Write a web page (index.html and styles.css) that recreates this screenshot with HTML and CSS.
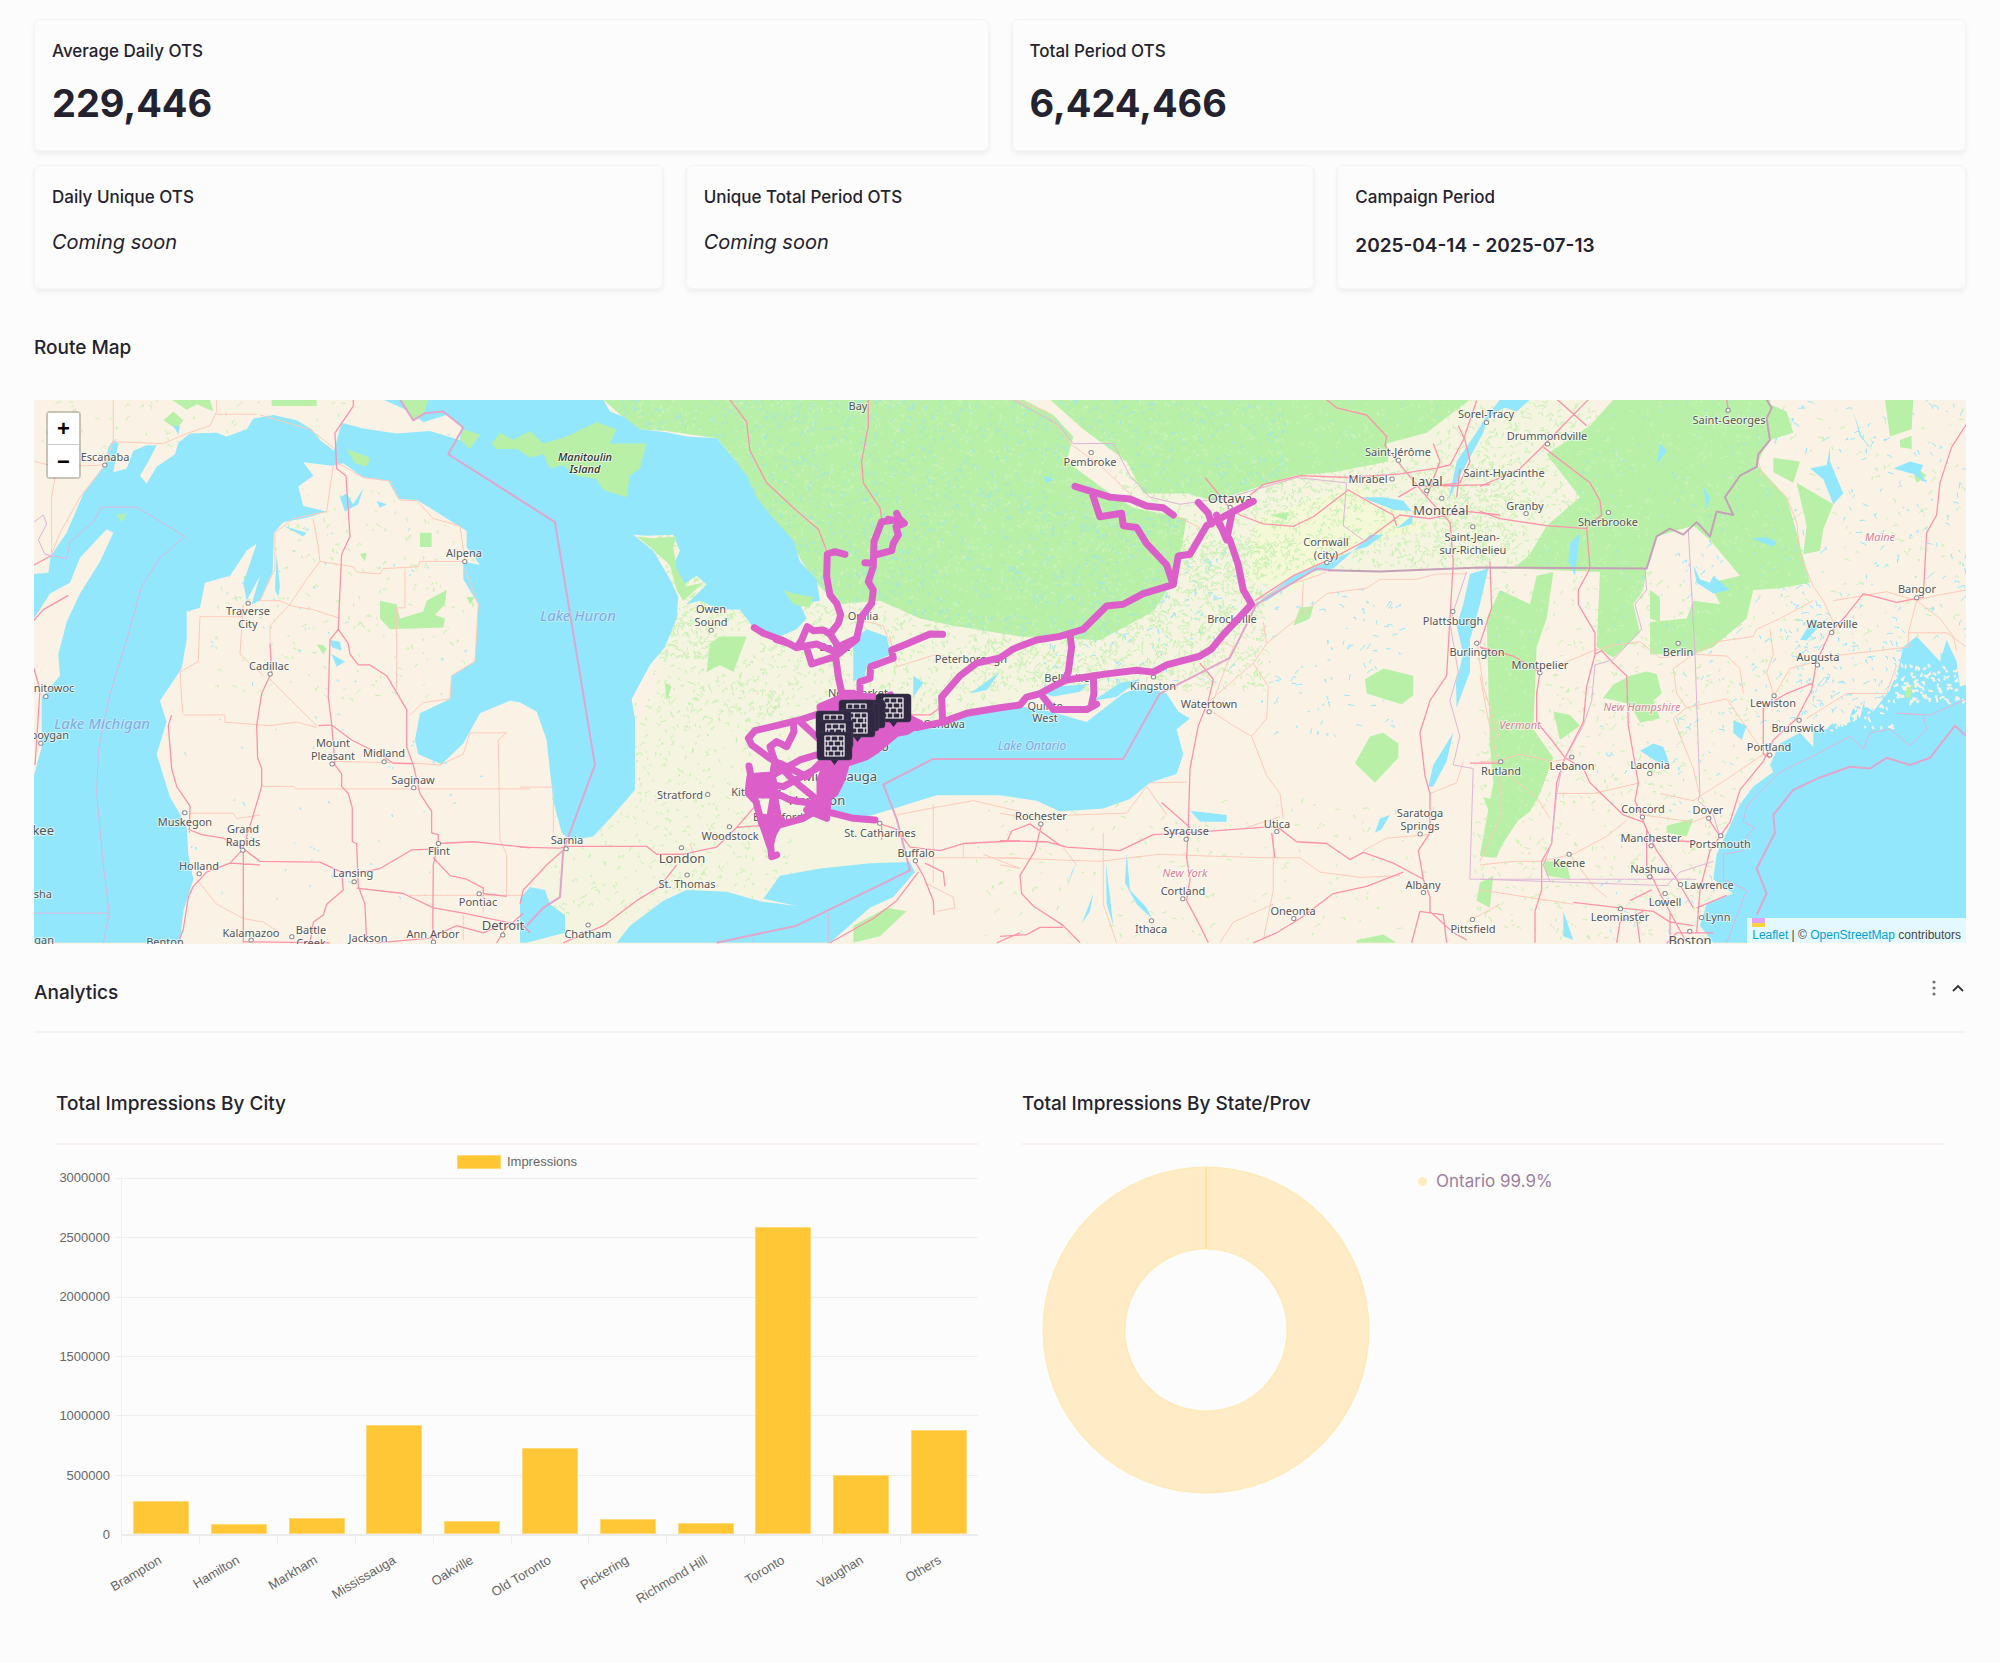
FILE: index.html
```html
<!DOCTYPE html>
<html lang="en">
<head>
<meta charset="utf-8">
<meta name="viewport" content="width=device-width, initial-scale=1">
<title>Campaign report</title>
<link rel="stylesheet" href="styles.css">
</head>
<body>
<main class="page">
  <section class="cards cards-two">
    <article class="card"><h3 class="card-title">Average Daily OTS</h3><p class="card-number">229,446</p></article>
    <article class="card"><h3 class="card-title">Total Period OTS</h3><p class="card-number">6,424,466</p></article>
  </section>
  <section class="cards cards-three">
    <article class="card"><h3 class="card-title">Daily Unique OTS</h3><p class="card-soon">Coming soon</p></article>
    <article class="card"><h3 class="card-title">Unique Total Period OTS</h3><p class="card-soon">Coming soon</p></article>
    <article class="card"><h3 class="card-title">Campaign Period</h3><p class="card-dates">2025-04-14 - 2025-07-13</p></article>
  </section>

  <h2 class="heading">Route Map</h2>
  <section class="map">
    <svg class="map-art" viewBox="0 0 1932 544" preserveAspectRatio="xMidYMid slice" role="img" aria-label="Route map">
      <defs>
        <g id="brick">
          <path d="M13 27h9l-4.500 6z" fill="#2f2840"/>
          <rect width="35" height="28" rx="3" fill="#2f2840" stroke="#463c58" stroke-width=".5"/>
          <path d="M8 4h19v20H8zM8 9h19M8 14h19M8 19h19M14 4v5M21 4v5M11 9v5M17 9v5M24 9v5M14 14v5M21 14v5M11 19v5M17 19v5M24 19v5" fill="none" stroke="#fff" stroke-width="1.200" stroke-linejoin="round"/>
        </g>
        <clipPath id="woods-clip">
          <path transform="matrix(.3333 0 0 .3571 486 -10)" d="M250 27H1510L1600 70 1660 130 1640 200 1770 290 1840 330 2000 360 1970 520 1900 620 1740 700 1500 690 1300 660 1200 640 1080 590 950 600 880 530 800 410 740 350 700 290 640 190 590 135 440 115 350 110z"/>
          <path transform="matrix(.3333 0 0 .3571 966 -10)" d="M150 27H1410L1280 120 1160 150 1165 200 1000 230 880 240 780 270 640 310 560 290 430 290 380 200 250 110z"/>
          <path transform="matrix(.3333 0 0 .3571 1446 -10)" d="M330 100 400 27H870V130L830 210 920 300 950 400 990 540 900 555 820 560 800 640 700 720 640 740 510 740 510 650 620 640 640 590 720 600 690 540 780 520 690 420 640 380 530 410 500 495 490 560 460 600 480 680 400 750 350 720 360 510 100 500 150 460 200 380 300 300 200 180zM20 640 60 560 150 600 170 520 220 510 200 640 170 720 160 950 220 1030 180 1130 150 1180 80 1230 50 1310 0 1300 40 1100 30 1000z"/>
        </clipPath>
      </defs>

      <rect width="1932" height="544" fill="#faf3e5"/>
      <path d="M486 544 520 440 620 300 640 130 960 200 1130 60 1390 0H1560L1500 170H1290L1150 270 880 330 790 420 890 425 880 460 700 510 570 544z" fill="#f4f4e0"/>
      <path d="M1220 120 1320 85 1400 130 1330 140 1260 190 1215 180z" fill="#f4f8d6"/>
      <path class="fleck-green"/><path class="fleck-pond"/>

      <g class="forest">
        <rect width="1932" height="544" clip-path="url(#woods-clip)"/>
        <g transform="matrix(.3333 0 0 .3571 -4 -10)">
          <path d="M400 85 430 60 460 85 440 110zM425 27H540L550 60 500 40 470 55zM725 27H860V45H725zM1170 400h35v40h-35zM1050 590 1100 600 1110 640 1180 620 1190 590 1250 560 1245 600 1215 630 1245 640 1240 665 1080 670 1050 640zM990 460 1010 455 1005 480zM860 712 880 715 890 725 880 740zM660 215 680 215 680 270 655 270zM525 440 545 445 550 475 530 475zM690 180 730 190 700 200zM1310 580 1335 580 1320 600zM640 520 655 525 650 560z"/>
        </g>
        <g transform="matrix(.3333 0 0 .3571 486 -10)">
          <path d="M570 710 600 690 680 690 660 740 640 790 600 770 560 790zM435 820 455 830 440 870zM1000 1500 1100 1450 1160 1460 1080 1530 1000 1548z"/>
        </g>
        <g transform="matrix(.3333 0 0 .3571 966 -10)">
          <path d="M1095 810 1150 780 1240 800 1240 855 1205 880 1100 850zM1065 1045 1110 970 1150 960 1195 990 1195 1030 1125 1100zM900 610 940 605 930 640 880 660zM1070 1540 1150 1525 1190 1548H1070zM1440 1380 1480 1360 1470 1450 1430 1430zM1450 1140 1490 1150 1480 1210zM810 350 865 342 860 365z"/>
        </g>
        <g transform="matrix(.3333 0 0 .3571 1446 -10)">
          <path d="M450 800 500 788 530 795 545 850 520 870 540 920 480 932 450 880 370 862 400 825zM220 900 270 910 300 940 240 980zM60 1120 150 1110 140 1170 40 1310 0 1305zM190 1320 260 1320 270 1370 200 1360zM870 40 920 60 940 120 870 140zM880 190 960 200 940 260 880 230zM950 260 1060 320 1030 390 1020 450 970 460 980 380zM1215 27 1300 27 1295 110 1230 130zM1260 140 1295 128 1295 165 1260 160zM560 1220 640 1200 620 1250 560 1240zM510 560 540 580 540 650 510 640zM1290 200 1340 240 1310 260z"/>
        </g>
      </g>
      <g clip-path="url(#woods-clip)"><path class="fleck-light"/><path class="fleck-water"/></g>

      <g class="water">
        <g transform="matrix(.3333 0 0 .3571 -4 -10)">
          <path d="M12 515 55 512 62 465 110 400 160 290 225 210 235 160 250 140 265 150 250 230 290 220 310 170 350 155 380 155 355 200 330 240 350 262 380 215 435 180 445 148 480 122 560 120 590 130 650 110 670 80 730 70 800 85 845 110 870 140 912 170 935 92 1000 108 1100 122 1200 115 1290 140 1295 100 1250 70 1180 90 1140 60 1060 27H1720L1740 60 1780 75 1830 110 1910 118 1970 130 2060 135 2110 190 2150 240 2180 300 2230 360 2290 420 2310 480 2360 530 2370 590 2310 600 2330 640 2300 670 2250 690 2170 665 2130 615 2070 615 2010 590 1970 600 2030 545 2000 520 1960 545 1930 490 1950 450 1930 405 1850 408 1810 405 1870 450 1920 530 1945 580 1940 640 1905 720 1860 770 1805 865 1815 920 1815 1120 1750 1190 1690 1250 1620 1260 1595 1240 1570 1150 1550 980 1520 900 1470 875 1440 870 1350 905 1300 990 1235 1048 1165 1020 1155 980 1170 905 1260 865 1265 800 1335 760 1345 600 1300 530 1300 480 1350 490 1310 440 1310 395 1200 330 1160 308 1105 305 1075 255 1000 245 940 205 905 212 820 202 850 240 805 270 820 325 890 340 830 358 760 370 732 400 728 510 690 590 665 600 690 520 650 590 640 540 680 430 650 450 600 520 525 540 510 610 470 620 470 700 455 780 390 870 410 930 380 1020 420 1140 470 1220 475 1300 490 1370 460 1460 450 1548H12V1080L35 1000 35 860 90 800 85 740 110 650 150 570 210 480 250 400 230 390 150 470 120 540 60 570 12 640z"/>
          <path d="M930 300 950 290 970 320 1000 275 985 320 945 340zM1040 310 1070 320 1050 330zM900 700 930 705 935 730 905 720zM905 740 945 760 920 775zM740 460 750 550 745 580 735 560zM760 380 830 400 820 410zM430 100 450 100 445 125z"/>
        </g>
        <g transform="matrix(.3333 0 0 .3571 486 -10)">
          <path d="M290 1548 330 1500 430 1430 500 1400 620 1405 720 1432 830 1445 730 1425 780 1360 900 1340 1050 1325 1170 1322 1185 1350 1120 1420 1050 1450 930 1548zM0 1425 30 1392 75 1400 90 1440 135 1470 135 1520 20 1548H0zM1000 700 1040 670 1100 690 1112 740 1040 770 1035 800 1000 815zM1180 800 1210 820 1180 860zM1350 850 1440 790 1400 840z"/>
          <path d="M910 1180 960 1100 1000 1040 1060 1020 1130 960 1200 940 1300 920 1500 885 1590 900 1700 930 1740 900 1810 850 1870 830 1940 850 1975 900 2010 920 1970 950 1990 1020 1970 1075 1890 1100 1830 1145 1750 1172 1620 1180 1550 1150 1440 1135 1250 1135 1130 1170 1040 1195 940 1190z"/>
          <path d="M1570 850 1600 830 1700 825 1680 845 1600 858zM1720 870 1800 820 1860 810 1790 860z"/>
        </g>
        <g transform="matrix(.3333 0 0 .3571 966 -10)">
          <path d="M1410 515 1465 500 1440 600 1410 700 1410 790 1370 890 1368 820 1390 740 1370 660 1390 600zM570 1178 680 1190 680 1210 600 1208zM1085 300 1150 300 1210 310 1240 345 1235 375 1190 388 1250 340 1180 335zM1060 450 1110 405 1150 405 1100 440zM1345 310 1370 200 1450 90 1470 50 1450 120 1380 240zM1125 1240 1140 1200 1170 1190 1145 1230zM1285 1110 1300 1050 1360 960 1340 1040 1300 1110zM1440 100 1500 27H1570L1490 60zM380 1295 390 1400 440 1450 455 1480 410 1440 375 1380zM318 1325 340 1500 320 1440zM228 1325 200 1395 215 1350zM440 1310 460 1365zM245 1495 280 1410 270 1460zM130 240 160 250 140 260zM1090 760 1080 800 1085 780zM780 590 880 520 960 490 1060 450 1000 500 930 510 800 590z"/>
        </g>
        <g transform="matrix(.3333 0 0 .3571 1446 -10)">
          <path d="M1270 720 1255 780 1230 840 1180 900 1150 880 1140 920 1120 890 1100 940 1060 930 1040 950 1000 950 1000 1000 960 960 900 990 870 1050 880 1070 820 1110 780 1160 740 1240 710 1300 700 1370 760 1410 680 1440 660 1500 700 1548H1480V820L1440 830 1430 760 1400 700 1380 760 1340 720 1310 690zM1050 160 1050 200 1090 290 1060 320 1030 250 990 220 1040 210zM1120 60 1145 130 1180 170 1140 130zM1290 200 1330 210 1320 230 1340 260 1300 235 1240 220zM640 490 660 530 690 540 700 520 750 560 700 570 650 540zM815 415 860 412 890 425 880 440zM760 925 800 940 785 980 760 960zM520 990 550 1000 570 1050 530 1040 480 1010zM580 120 620 180 600 150zM540 150 530 210 560 170zM270 430 300 400 285 520 265 480zM960 700 1000 640 1020 660 980 700zM60 27H150L110 60 60 45zM250 1460 280 1540 250 1530zM670 270 690 300 680 330z"/>
        </g>
      </g>
      <g class="forest" transform="matrix(.3333 0 0 .3571 -4 -10)">
        <path d="M1115 27H1195L1180 70 1150 85zM1290 140 1300 110 1350 125 1320 165zM1365 130 1385 150 1410 120 1450 140 1500 115 1540 150 1610 130 1700 90 1760 110 1740 150 1850 150 1830 220 1800 240 1790 300 1720 280 1700 250 1640 240 1600 210 1560 220 1540 180 1500 190 1460 165 1400 165zM1820 410 1870 415 1940 410 1930 440 1940 500 1970 550 2020 540 1960 590 1940 560 1920 490 1860 440zM950 165 1020 190 1010 215 975 205zM2260 560 2290 570 2350 580 2340 610 2290 600zM260 350 290 345 275 370zM5625 830 5650 825 5640 865 5625 860z"/>
      </g>
      <path class="fleck-isle"/>

      <g class="roads-minor">
        <path transform="matrix(.3333 0 0 .3571 -4 -10)" d="M250 27V140L225 210M250 145 400 150 470 122 540 100 560 60V27M560 68H680M690 70 840 110 915 165M12 200 80 215 225 210 150 300 90 400 62 465M80 215 65 300V460M925 205 1000 245 1080 255 1110 308 1160 310 1210 360 1290 380 1305 480M1305 480 1170 480 1165 495 1060 500 1050 515 980 510 970 495 870 480 865 440 850 360M870 480 830 530 780 600 720 660V710M690 590H750L785 605 850 615 925 638M690 590 735 500 735 400 790 360 890 340 910 210M1125 500V610H1100V840M1305 500 1345 600 1335 760 1265 800 1260 865 1180 875 1140 910M460 910H585V930L720 940 800 930 860 945M720 810 860 940M510 635H640M640 600 630 740 700 800M510 635 505 760 450 790 458 905M915 1040 1150 1045 1230 1050 1300 1020 1320 960 1430 960 1405 980 1410 1260 1430 1300V1420M695 1110H790L800 1117H1500M480 1185H610L620 1200 690 1190M500 1370 560 1440 640 1480 700 1490 750 1520M1140 1415H1480M1300 1470V1540M1360 1390V1465"/>
        <path transform="matrix(.3333 0 0 .3571 486 -10)" d="M0 1112H100V1240M1110 690 1130 775 1250 740 1330 760 1420 770M1000 640 1090 660 1110 710M1130 1190 1240 1170 1360 1150 1500 1180M1240 1160V1380M1200 1310H1500M1330 1270V1310M1215 1380 1300 1420 1305 1450 1250 1460M510 1270 520 1300M1500 1340 1390 1300"/>
        <path transform="matrix(.3333 0 0 .3571 966 -10)" d="M45 27 140 60 210 150 300 210 400 300 520 350 600 385M980 510 920 530 850 550 770 590M980 570 1100 555 1140 530 1250 530 1310 515H1400M980 570 905 630 910 540M905 630 800 710 760 765 630 870M640 870 700 720 660 700M790 650 800 710M760 765 805 830 800 920 755 970 700 940 635 900M755 970 800 1080 840 1130 850 1200M450 1100 560 1098M0 1185 60 1195 380 1185 440 1110 500 1190M0 1310 300 1320 480 1300 620 1305 800 1310 900 1310 960 1350 1080 1365 1200 1360M310 1240V1440L350 1548M740 1225 840 1195M820 1240V1400L790 1540M1290 1130 1370 1100 1390 1040M1290 1245 1160 1255 1090 1290M1430 700 1450 830 1500 980M180 1270 230 1330M0 1330 60 1340M660 1548 700 1490 820 1440M1400 1490 1500 1440"/>
        <path transform="matrix(.3333 0 0 .3571 1446 -10)" d="M830 190 850 240 920 300 950 370 960 460 1000 550 1030 590 1060 650M1000 590 900 640 830 670 820 690 710 705 640 740 540 750 480 705 400 715 340 730 200 785M640 740 740 745 780 780 790 850M640 740 580 780 590 850 620 890 580 920 610 990 640 1060 660 1140M620 890 740 865 840 1000M1060 590 1220 565 1310 590 1370 575 1460 560M1310 590 1285 680 1400 680 1460 720M1285 680V720L1010 750M1010 760 930 780 880 860 850 900M880 850 860 790 880 740 870 670M980 920 1100 850 1220 850 1250 770M1310 590 1380 640 1420 690 1430 730M0 1040 50 1040 120 1020 220 1040 280 1030M230 1130 340 1130 480 1100M180 1320 280 1300 380 1250 440 1205M270 1300 340 1390 380 1420M0 1400 280 1440M490 1190 640 1210 690 1190M540 1130 640 1150 740 1090 850 1020M0 1330 100 1320 180 1320M0 800 20 900 50 1030M60 1060 170 1140 210 1200M60 1060 60 1200 0 1320"/>
      </g>
      <g class="roads-main">
        <path transform="matrix(.3333 0 0 .3571 -4 -10)" d="M970 27V45L915 120 920 220 948 240 960 410 935 460 930 560 925 670 900 700 895 860 905 935 915 1050 935 1075V1110L955 1130 967 1170V1265L980 1270 985 1390 1005 1440 1010 1548M925 670 955 710 960 740 985 770 1020 770 1070 800 1130 895V1000L1150 1050 1170 1130 1205 1180V1240L1225 1245 1225 1270M1225 1270 1210 1330 1208 1548M720 710 725 790 695 850 680 940 683 1030 695 1060V1110L670 1190 640 1280 640 1548M865 940 905 938 965 980 1050 1020 1090 1045 1150 1047M425 910 415 940 425 1060 440 1110 480 1165 478 1240M475 1230 515 1245 580 1255 640 1285 690 1320 870 1322 935 1350 1000 1350 1050 1340 1145 1288 1225 1285M1225 1270 1330 1265 1500 1282M640 1285 600 1325 530 1350 490 1390 475 1420 460 1510 445 1548M12 490 62 465M12 645 40 615 115 575M12 780 30 840 15 1050M980 1395 1120 1410 1210 1450 1300 1465 1480 1500 1500 1520M935 1350 940 1400 890 1440 880 1470 850 1490 840 1548M1210 1310 1260 1360 1310 1370 1360 1395V1410L1430 1418M1040 1548 1200 1535 1280 1500 1360 1520 1410 1500M600 1325 690 1330M640 1545 900 1548M1400 1548 1425 1510 1480 1465"/>
        <path transform="matrix(.3333 0 0 .3571 486 -10)" d="M630 27 680 90 690 170 740 260 820 330 895 390 920 450M1045 27 1045 100 1025 200 1030 260 1080 330 1085 360M0 1280 120 1283 140 1278 380 1278 410 1300 490 1300 590 1280 650 1225 720 1220M140 1280 80 1330 10 1400 0 1440M470 1330 420 1390 350 1430 250 1500 130 1548M650 1225 720 1150M1080 1215 1130 1230 1170 1280 1260 1290 1330 1270 1500 1262M1185 1320 1210 1360 1240 1430 1242 1470M1195 1350 1130 1430 1060 1480 930 1548M1085 1220 1085 1260M1215 1325 1270 1350 1275 1390M1140 910 1230 910 1260 890M1430 1548 1500 1520"/>
        <path transform="matrix(.3333 0 0 .3571 966 -10)" d="M980 27 1010 50 1100 70 1130 100 1160 130 1155 155 1210 220 1290 310M615 245 690 330 720 350 790 375 880 382 940 355 1045 280 1120 320 1180 350 1190 380M750 295 790 265 900 240 1045 245 1200 235 1300 220 1350 210 1390 140 1430 30M765 590 880 520 1000 470 1100 420 1200 350 1290 360 1400 340 1500 350M1290 310 1350 370 1360 480 1350 640 1340 800 1290 870 1260 960 1275 1080 1290 1130 1290 1240 1255 1290 1270 1370 1290 1420V1460L1360 1520 1400 1540M600 765 640 810 625 870 595 940 570 1060 565 1220 560 1310 570 1370 560 1430 600 1500 625 1548M0 1262 140 1265 200 1280 360 1290 460 1245 560 1240 830 1222 890 1265 980 1270 1050 1315 1090 1295 1180 1325 1270 1370M125 1215 105 1290 60 1360 65 1410 100 1445 190 1500 240 1548M1210 1350 1100 1390 1000 1410 900 1480 830 1520 760 1548M815 1240 825 1310M485 1155 570 1225M22 1262 35 1235 90 1215 180 1275M1260 1460 1235 1548M1440 720 1500 745M1470 480 1475 610 1440 710M1375 100 1395 140 1410 200 1380 260 1290 270M1300 150 1320 200 1280 300M1410 1045 1500 1045M0 1530 80 1525 120 1505 190 1505M1380 220 1370 300M1195 300 1250 270 1470 265M1260 1460 1330 1470 1340 1548"/>
        <path transform="matrix(.3333 0 0 .3571 1446 -10)" d="M325 27 180 165 120 220 50 250 0 270M190 160 260 210 330 260 360 310 365 350 320 385 330 500 295 560 295 600 345 680 345 740 320 830 310 930 255 1030 230 1100 215 1270 185 1320 185 1400 165 1460 165 1548M0 340 60 360 200 380 320 388M232 27 320 100M0 720 100 745 180 790 170 850 170 930 215 980 255 1030 310 1060 330 1100 430 1190 490 1210 530 1290 590 1370 640 1450M345 740 365 730 400 765 440 800 445 940 460 1020 475 1100 465 1150 500 1230 500 1330 540 1410 620 1548M740 27 745 55M1460 95 1415 160 1380 260 1370 350 1340 400 1330 580 1250 595 1150 570 1100 630 1050 680 1010 760 995 840 950 920 880 980 850 1040 780 1120 750 1210 690 1290 660 1400 650 1520M1000 820 920 850 850 890 850 1020 870 1030M500 1260 650 1265M515 1400 450 1430M280 1435 420 1450 520 1460 570 1490 640 1500M685 1200 720 1250M740 1415 650 1450M570 1460V1548M410 1548 420 1490 490 1460M470 1480 480 1548M560 1550 590 1520 700 1520"/>
      </g>
      <g class="borders">
        <path transform="matrix(.3333 0 0 .3571 -4 -10)" class="border-strong" d="M1110 27 1150 85 1185 65 1240 60 1300 105 1255 180 1575 370 1695 1050 1600 1290 1590 1420 1540 1450 1490 1500M2060 1548 2300 1500 2640 1345 2600 1200 2560 1105 2710 1033H3280L3390 850 3600 750 3680 600 3860 500 3900 505"/>
        <path transform="matrix(.3333 0 0 .3571 -4 -10)" d="M12 370 40 350 50 375 25 420 45 460 110 472 120 425 190 370 215 328H320L465 410 390 470 335 550 290 700 240 850 205 1010 200 1130 220 1330 238 1465 220 1548M12 1465H238M2170 1548V1535M2395 1548V1465M2950 27 3090 100 3130 150 3250 150 3300 240 3360 300 3450 320 3600 300 3800 245 3950 260 3940 380 4000 420M4310 510 4260 650 4285 790 4260 870 4290 970 4270 1050 4330 1060 4320 1370H5000"/>
        <path transform="matrix(.3333 0 0 .3571 1446 -10)" class="border-strong" d="M830 1470 860 1410 830 1340 885 1240 880 1190 940 1120 1020 1085 1110 1055 1170 1060 1220 1030 1290 1050 1350 1030 1425 940 1460 970"/>
        <path transform="matrix(.3333 0 0 .3571 1446 -10)" d="M740 1548 800 1400 730 1370 730 1300 790 1290 800 1250 825 1225 790 1210 800 1165 900 1070 1000 1025 1110 970 1150 1005 1170 960 1230 950 1290 995 1340 950 1330 910 1250 905 1350 910 1460 865M0 1370 560 1388 600 1350 700 1320M625 390 645 740 655 1000 660 1130 655 1150 700 1190 720 1250M495 500 500 560 465 600 485 670 400 755 345 770 335 870 310 940 250 1040 230 1130 215 1270 190 1330 210 1375"/>
        <path transform="matrix(.3333 0 0 .3571 1446 -10)" class="border-land" d="M-455 505-300 508 0 497 500 500 530 410 570 388 610 405 650 370 690 410 710 340 760 350 735 300 780 240 830 215 835 180 870 140 860 80 875 50 860 27"/>
      </g>

      <g class="towns">
        <path id="towns-w" transform="matrix(.3333 0 0 .3571 -4 -10)" d="M224 210h1M654 597h1M720 795h1M1304 480h1M47 858h1M32 989h1M906 1047h1M1062 1041h1M1151 1114h1M464 1184h1M638 1289h1M507 1355h1M972 1377h1M1225 1270h1M1347 1411h1M1418 1526h1M663 1540h1M785 1531h1M1210 1546h1M2043 673h1M2033 1133h1M2098 1223h1M1954 1282h1M1971 1358h1M1608 1285h1M1674 1498h1M2549 1213h1M2656 1318h1M2823 773h1"/>
        <path id="towns-e" transform="matrix(.3333 0 0 .3571 966 -10)" d="M273 175h1M690 328h1M1459 91h1M1195 197h1M1176 249h1M1280 282h1M1325 303h1M1418 383h1M980 483h1M1358 620h1M1430 709h1M460 804h1M627 901h1M122 1215h1M558 1258h1M830 1236h1M1260 1243h1M548 1425h1M881 1480h1M454 1486h1M1270 1407h1M1417 1483h1M1642 151h1M1578 346h1M1825 343h1M2184 57h1M2750 582h1M2495 679h1M2034 709h1M2452 770h1M1619 792h1M2322 856h1M2397 925h1M2309 1022h1M1502 1041h1M1715 1028h1M1949 1074h1M1927 1196h1M2126 1199h1M1953 1276h1M2162 1248h1M1707 1300h1M1949 1363h1M2041 1385h1M1995 1410h1M1861 1453h1M2104 1477h1M2069 1516h1"/>
        <use href="#towns-w" class="town-core"/><use href="#towns-e" class="town-core"/>
      </g>

      <g class="labels">
        <text x="71" y="61">Escanaba</text><text x="430" y="157">Alpena</text><text x="214" y="215">Traverse</text><text x="214" y="228">City</text><text x="235" y="270">Cadillac</text><text x="20" y="292">nitowoc</text><text class="end" x="35" y="339">boygan</text><text class="city end" x="20" y="435">kee</text><text class="end" x="18" y="498">sha</text><text class="end" x="20" y="544">gan</text>
        <text x="299" y="347">Mount</text><text x="299" y="360">Pleasant</text><text x="350" y="357">Midland</text><text x="379" y="384">Saginaw</text><text x="151" y="426">Muskegon</text><text x="209" y="433">Grand</text><text x="209" y="446">Rapids</text><text x="165" y="470">Holland</text><text x="319" y="477">Lansing</text><text x="405" y="455">Flint</text><text x="444" y="506">Pontiac</text><text class="city" x="469" y="530">Detroit</text><text x="399" y="538">Ann Arbor</text><text x="334" y="542">Jackson</text><text x="277" y="534">Battle</text><text x="277" y="547">Creek</text><text x="217" y="537">Kalamazoo</text><text x="131" y="546">Benton</text>
        <text class="isle" x="551" y="61">Manitoulin</text><text class="isle" x="551" y="73">Island</text><text x="824" y="10">Bay</text><text x="677" y="213">Owen</text><text x="677" y="226">Sound</text><text x="829" y="220">Orillia</text><text x="801" y="251">Barrie</text><text x="937" y="263">Peterborough</text><text x="824" y="297">Newmarket</text><text x="910" y="328">Oshawa</text><text class="city" x="831" y="351">Toronto</text><text class="city" x="806" y="381">Mississauga</text><text x="646" y="399">Stratford</text><text x="722" y="396">Kitchener</text><text class="city" x="783" y="405">Hamilton</text><text x="744" y="421">Brantford</text><text x="696" y="440">Woodstock</text><text x="846" y="437">St. Catharines</text><text x="882" y="457">Buffalo</text><text x="533" y="444">Sarnia</text><text class="city" x="648" y="463">London</text><text x="653" y="488">St. Thomas</text><text x="554" y="538">Chatham</text>
        <text x="1056" y="66">Pembroke</text><text class="city" x="1196" y="103">Ottawa</text><text x="1452" y="18">Sorel-Tracy</text><text x="1364" y="56">Saint-Jérôme</text><text x="1334" y="83">Mirabel</text><text class="city" x="1393" y="86">Laval</text><text class="city" x="1407" y="115">Montréal</text><text x="1470" y="77">Saint-Hyacinthe</text><text x="1292" y="146">Cornwall</text><text x="1292" y="159">(city)</text><text x="1438" y="141">Saint-Jean-</text><text x="1439" y="154">sur-Richelieu</text><text x="1419" y="225">Plattsburgh</text><text x="1198" y="223">Brockville</text><text x="1033" y="282">Belleville</text><text x="1119" y="290">Kingston</text><text x="1011" y="310">Quinte</text><text x="1011" y="322">West</text><text x="1175" y="308">Watertown</text><text x="1443" y="256">Burlington</text><text x="1467" y="375">Rutland</text><text x="1007" y="420">Rochester</text><text x="1152" y="435">Syracuse</text><text x="1243" y="428">Utica</text><text x="1386" y="417">Saratoga</text><text x="1386" y="430">Springs</text><text x="1149" y="495">Cortland</text><text x="1259" y="515">Oneonta</text><text x="1117" y="533">Ithaca</text><text x="1389" y="489">Albany</text><text x="1439" y="533">Pittsfield</text>
        <text x="1513" y="40">Drummondville</text><text x="1491" y="110">Granby</text><text x="1574" y="126">Sherbrooke</text><text x="1695" y="24">Saint-Georges</text><text x="1883" y="193">Bangor</text><text x="1798" y="228">Waterville</text><text x="1644" y="256">Berlin</text><text x="1784" y="261">Augusta</text><text x="1506" y="269">Montpelier</text><text x="1739" y="307">Lewiston</text><text x="1764" y="332">Brunswick</text><text x="1735" y="351">Portland</text><text x="1538" y="370">Lebanon</text><text x="1616" y="369">Laconia</text><text x="1609" y="413">Concord</text><text x="1674" y="414">Dover</text><text x="1617" y="442">Manchester</text><text x="1686" y="448">Portsmouth</text><text x="1535" y="467">Keene</text><text x="1616" y="473">Nashua</text><text x="1675" y="489">Lawrence</text><text x="1631" y="506">Lowell</text><text x="1586" y="521">Leominster</text><text x="1684" y="521">Lynn</text><text class="city" x="1656" y="545">Boston</text>
        <text class="lake" x="68" y="329">Lake Michigan</text><text class="lake" x="544" y="221">Lake Huron</text><text class="lake lake-small" x="998" y="350">Lake Ontario</text>
        <text class="state" x="1151" y="477">New York</text><text class="state" x="1846" y="141">Maine</text><text class="state" x="1608" y="311">New Hampshire</text><text class="state" x="1486" y="329">Vermont</text>
      </g>

      <g class="route">
        <g transform="matrix(.3333 0 0 .3333 686 80)">
          <path d="M103 443 130 460 185 480 230 503 245 480 262 440 280 452 310 450 330 462 355 430 362 405 350 370 330 345 320 290 322 222 345 215 375 223M330 462 355 500 410 475 425 410 455 370 460 330 445 305 460 260 462 185 485 125 540 118 553 130 528 140 535 165 520 190 515 212 465 225M435 248 460 250M230 503 290 492 345 515M275 552 262 510M345 515 355 590 370 660M275 552 345 530 410 478M420 655 420 605 450 595 452 560 520 535 515 510 560 492 630 462 668 463M370 640 400 640 420 660M360 680 240 720 105 752 85 775 95 795 150 835 175 850M220 725 222 755 200 800 170 785 150 800 165 845 160 870M240 725 300 780M87 858 95 900 85 940 108 965 125 1030 150 1080 155 1130 170 1125M95 895 150 890 240 840 290 825M130 900 200 860 260 890 310 840M180 850 240 880M170 940 210 960 310 975 225 905 170 850M160 930 175 1010 160 1040 250 1015 300 985M300 990 400 1015 465 1020M500 650 512 645M185 1025 150 1010 165 920M130 910 190 920 300 860M370 650 460 650M530 100 540 120M505 118 545 125M168 478 205 490"/>
          <path d="M300 680 370 650 480 660 560 710 600 730 560 755 530 760 470 810 440 830 380 850 365 900 345 940 325 950 320 1015 260 990 300 950 300 900 320 850z"/>
          <path d="M90 890 155 885 165 920 160 945 110 945 85 930zM120 1010 185 1020 160 1060 150 1100z"/>
        </g>
        <g transform="matrix(.3333 0 0 .3571 486 -10)">
          <path d="M1190 945 1268 930 1340 905 1440 890 1500 882 1520 860 1560 850 1600 830 1640 812 1760 795 1850 785 1900 790 1940 770 2040 745 2075 725 2110 685 2155 640 2195 600 2170 560 2155 490 2130 420 2100 380 2090 350M1268 930 1265 860 1320 800 1370 765 1440 750 1480 725 1550 700 1620 690 1690 670 1760 605 1810 600 1870 570 1960 545 1975 465 2010 460 2060 380 2120 350 2200 312M1960 545 1940 490 1880 430 1850 385 1810 380 1805 345 1740 355 1715 285M1665 270 1770 300 1830 305 1880 325 1930 330 1960 350M1650 685 1655 720 1645 790 1635 810M1570 860 1600 895 1700 895 1730 880M1720 800 1722 850 1715 880M2035 315 2065 345 2075 375M2100 375 2120 420 2135 350"/>
        </g>
      </g>

      <g>
        <use href="#brick" x="842" y="294"/><use href="#brick" x="816" y="300"/><use href="#brick" x="810" y="303"/><use href="#brick" x="805" y="300"/><use href="#brick" x="806" y="309"/><use href="#brick" x="782" y="311"/><use href="#brick" x="784" y="320"/><use href="#brick" x="783" y="332"/>
      </g>
    </svg>
    <div class="zoom">
      <button class="zoom-button" type="button" aria-label="Zoom in">+</button>
      <button class="zoom-button" type="button" aria-label="Zoom out">−</button>
    </div>
    <div class="credit">
      <svg class="flag" viewBox="0 0 13 9" aria-hidden="true"><path fill="#e0a3f5" d="M0 0h13v5H0z"/><path fill="#fdd13f" d="M0 5h13v4H0z"/></svg>
      <p class="credit-text"><a href="#leaflet">Leaflet</a> | © <a href="#osm">OpenStreetMap</a> contributors</p>
    </div>
  </section>

  <header class="bar">
    <h2 class="bar-title">Analytics</h2>
    <div class="bar-tools">
      <button class="icon-button" type="button" aria-label="More options"><svg width="6" height="18" viewBox="0 0 6 18"><g fill="#777"><circle cx="3" cy="3" r="1.600"/><circle cx="3" cy="9" r="1.600"/><circle cx="3" cy="15" r="1.600"/></g></svg></button>
      <button class="icon-button" type="button" aria-label="Collapse"><svg width="16" height="18" viewBox="0 0 16 18"><path d="M3 12 8 7 13 12" fill="none" stroke="#333" stroke-width="1.800"/></svg></button>
    </div>
  </header>

  <section class="panels">
    <article class="panel">
      <h3 class="panel-title">Total Impressions By City</h3>
      <div class="legend"><span class="swatch"></span>Impressions</div>
      <div class="chart">
        <div class="scale"><span>3000000</span><span>2500000</span><span>2000000</span><span>1500000</span><span>1000000</span><span>500000</span><span>0</span></div>
        <div class="plot">
          <div class="lines"><i></i><i></i><i></i><i></i><i></i><i></i></div>
          <div class="bars">
            <div class="slot"><b style="height:9.2%"></b></div>
            <div class="slot"><b style="height:2.7%"></b></div>
            <div class="slot"><b style="height:4.6%"></b></div>
            <div class="slot"><b style="height:30.6%"></b></div>
            <div class="slot"><b style="height:3.7%"></b></div>
            <div class="slot"><b style="height:24.1%"></b></div>
            <div class="slot"><b style="height:4.3%"></b></div>
            <div class="slot"><b style="height:3.1%"></b></div>
            <div class="slot"><b style="height:86.3%"></b></div>
            <div class="slot"><b style="height:16.5%"></b></div>
            <div class="slot"><b style="height:29.2%"></b></div>
          </div>
        </div>
        <div class="names">
          <div class="name"><span>Brampton</span></div><div class="name"><span>Hamilton</span></div><div class="name"><span>Markham</span></div><div class="name"><span>Mississauga</span></div><div class="name"><span>Oakville</span></div><div class="name"><span>Old Toronto</span></div><div class="name"><span>Pickering</span></div><div class="name"><span>Richmond Hill</span></div><div class="name"><span>Toronto</span></div><div class="name"><span>Vaughan</span></div><div class="name"><span>Others</span></div>
        </div>
      </div>
    </article>
    <article class="panel">
      <h3 class="panel-title">Total Impressions By State/Prov</h3>
      <div class="share">
        <svg class="donut" viewBox="0 0 328 328" role="img" aria-label="Ontario 99.9%">
          <circle cx="164" cy="164" r="122" fill="none" stroke="#ffe9b8" stroke-width="83"/>
          <circle cx="164" cy="164" r="122" fill="none" stroke="#ffecc6" stroke-width="80"/>
          <path d="M164 1V82" stroke="#ffe3a3" stroke-width="2"/>
        </svg>
        <p class="share-label"><span class="dot"></span>Ontario 99.9%</p>
      </div>
    </article>
  </section>
</main>
<script src="flecks.js"></script>
</body>
</html>
```
FILE: flecks.js
```js
// Scatters small lakes, clearings and woodlots over the map's land cover.
(function () {
  var seed = 7;
  function rnd() {
    seed = (seed * 16807) % 2147483647;
    return seed / 2147483647;
  }
  // Each area is [count, left, top, right, bottom, size].
  function scatter(selector, areas) {
    var d = "";
    areas.forEach(function (a) {
      for (var i = 0; i < a[0]; i++) {
        var x = a[1] + rnd() * (a[3] - a[1]);
        var y = a[2] + rnd() * (a[4] - a[2]);
        var dx = (rnd() - 0.3) * a[5];
        var dy = (rnd() - 0.7) * a[5];
        d += "M" + x.toFixed(1) + " " + y.toFixed(1) + "l" + dx.toFixed(1) + " " + dy.toFixed(1) +
          "l" + (rnd() * 3 - 1).toFixed(1) + " " + (rnd() * 3).toFixed(1);
      }
    });
    document.querySelector(selector).setAttribute("d", d);
  }
  scatter(".fleck-light", [[2600, 560, 0, 1250, 260, 5], [2200, 1250, 0, 1800, 480, 6]]);
  scatter(".fleck-water", [[2600, 560, 0, 1250, 260, 6], [400, 1250, 0, 1800, 250, 5]]);
  scatter(".fleck-green", [
    [900, 620, 200, 960, 330, 7], [500, 520, 300, 760, 520, 6], [350, 620, 130, 700, 260, 7],
    [1800, 940, 140, 1230, 290, 8], [700, 1080, 40, 1260, 180, 7],
    [900, 1230, 60, 1480, 170, 7], [600, 1400, 0, 1580, 160, 8],
    [220, 180, 80, 440, 300, 6], [60, 0, 0, 340, 50, 6],
    [500, 1440, 150, 1620, 540, 7], [300, 1600, 180, 1760, 540, 6],
    [150, 940, 400, 1400, 540, 7], [120, 1740, 0, 1930, 240, 7]
  ]);
  scatter(".fleck-pond", [
    [160, 1740, 0, 1932, 260, 9], [120, 1640, 130, 1800, 330, 8], [90, 1220, 190, 1370, 340, 8],
    [160, 1010, 150, 1200, 290, 8], [120, 130, 20, 450, 500, 3], [60, 1560, 320, 1700, 540, 5],
    [120, 1760, 240, 1880, 340, 9]
  ]);
  scatter(".fleck-isle", [[110, 1845, 265, 1930, 305, 5], [50, 1770, 300, 1860, 330, 5]]);
})();
```
FILE: styles.css
```css
* { box-sizing: border-box; }
body { margin: 0; background: #fcfcfc; color: #24222e; font-family: Inter, "Liberation Sans", sans-serif; }
h2, h3, p { margin: 0; }
button { font: inherit; border: 0; padding: 0; background: none; cursor: pointer; }
.page { padding: 19px 34px 56px; }

.cards { display: grid; gap: 23px; margin-bottom: 14px; }
.cards-two { grid-template-columns: repeat(2, 1fr); }
.cards-three { grid-template-columns: repeat(3, 1fr); }
.card { padding: 19px 17px; border: 1px solid #f7f2f4; border-radius: 6px; box-shadow: 0 3px 5px rgba(0, 0, 0, .06); }
.cards-two .card { height: 132px; }
.cards-three .card { height: 124px; }
.card-title { font-size: 17px; line-height: 24px; font-weight: 500; }
.card-number { margin-top: 17px; font-size: 38px; line-height: 46px; font-weight: 700; }
.card-soon { margin-top: 20px; font-size: 20px; line-height: 26px; font-style: italic; }
.card-dates { margin-top: 24px; font-size: 19px; line-height: 26px; font-weight: 600; }

.heading { margin: 46px 0 39px; font-size: 19px; line-height: 26px; font-weight: 450; }

.map { position: relative; height: 544px; overflow: hidden; background: #faf3e5; }
.map-art { display: block; width: 100%; height: 100%; }
.map-art path { vector-effect: non-scaling-stroke; }
.forest { fill: #b8f0a8; }
.water { fill: #93e7fd; }
.fleck-light, .fleck-water, .fleck-green, .fleck-pond, .fleck-isle { fill: none; stroke-width: 1; }
.fleck-light { stroke: #d0f1bd; }
.fleck-water { stroke: #a2e8de; }
.fleck-green { stroke: #c9f1b4; }
.fleck-pond { stroke: #9be7fa; }
.fleck-isle { stroke: #faf3e5; stroke-width: 2; }
.roads-minor, .roads-main, .borders { fill: none; stroke-linejoin: round; }
.roads-minor { stroke: #ffc9b9; stroke-width: 1; }
.roads-main { stroke: #ff92ab; stroke-width: 1.3; }
.borders { stroke: #dfb6d6; stroke-width: 1; }
.border-strong { stroke: #e0a6cb; stroke-width: 2; }
.border-land { stroke: #c5a0b8; stroke-width: 2; }
.towns { fill: none; stroke: #8a8a8a; stroke-width: 5; stroke-linecap: round; }
.town-core { stroke: #fff; stroke-width: 3; }
.labels { font-family: "Noto Sans", sans-serif; font-size: 11px; fill: #555; text-anchor: middle; paint-order: stroke; stroke: rgba(255, 255, 255, .6); stroke-width: 2px; stroke-linejoin: round; }
.labels .end { text-anchor: end; }
.labels .city { font-size: 13px; }
.labels .isle { font-style: italic; font-weight: 500; fill: #333; }
.labels .lake { font-size: 15px; font-style: italic; fill: #86a8e8; stroke: rgba(255, 255, 255, .3); }
.labels .lake-small { font-size: 12px; }
.labels .state { font-style: italic; fill: #dc8097; }
.route { fill: #dc5fc9; stroke: #dc5fc9; stroke-width: 7; stroke-linecap: round; stroke-linejoin: round; }
.route path:first-child { fill: none; }

.zoom { position: absolute; top: 11px; left: 12px; border: 2px solid rgba(0, 0, 0, .2); border-radius: 4px; background-clip: padding-box; }
.zoom-button { display: block; width: 31px; height: 32px; background: #fff; color: #000; font: 700 22px/31px "Liberation Sans", sans-serif; }
.zoom-button:first-child { border-bottom: 1px solid #ccc; }
.credit { position: absolute; right: 0; bottom: 0; height: 26px; padding: 0 5px; background: rgba(255, 255, 255, .75); }
.flag { display: block; width: 13px; height: 9px; }
.credit-text { font: 12px/16px "Liberation Sans", sans-serif; color: #444; white-space: nowrap; }
.credit-text a { color: #00a2dc; text-decoration: none; }

.bar { display: flex; justify-content: space-between; align-items: flex-start; height: 89px; padding-top: 35px; border-bottom: 2px solid #f7f0f3; }
.bar-title { font-size: 19px; line-height: 28px; font-weight: 450; }
.bar-tools { display: flex; gap: 13px; }
.icon-button { display: flex; }

.panels { display: grid; grid-template-columns: repeat(2, minmax(0, 1fr)); padding-top: 58px; }
.panel { padding: 0 22px; }
.panel-title { padding-bottom: 26px; border-bottom: 2px solid #f8eff1; font-size: 19px; line-height: 26px; font-weight: 450; }
.legend { display: flex; justify-content: center; align-items: center; gap: 6px; margin-top: 9px; font: 13px/16px "Liberation Sans", sans-serif; color: #666; }
.swatch { width: 44px; height: 14px; background: #ffc634; border: 1px solid #ffd976; }
.chart { display: grid; grid-template-columns: 54px 1fr; column-gap: 11px; font: 13px/16px "Liberation Sans", sans-serif; color: #666; }
.scale { display: flex; flex-direction: column; justify-content: space-between; height: 373px; margin-bottom: -8px; text-align: right; }
.plot { display: grid; height: 358px; margin-top: 8px; border-left: 1px solid #eee; border-bottom: 2px solid #ececec; }
.lines, .bars { grid-area: 1 / 1; display: flex; min-height: 0; }
.lines { flex-direction: column; margin-left: -7px; }
.lines i { flex: 1; border-top: 1px solid #efefef; }
.slot { flex: 1; display: flex; justify-content: center; align-items: flex-end; }
.slot b { width: 72%; background: #ffc636; border: 1px solid #ffda7c; }

/* Axis names end at the middle of their column and rise to the right. */
.names { grid-column: 2; display: grid; grid-template-columns: repeat(11, minmax(0, 1fr)); height: 90px; }
.name { display: grid; grid-template-columns: repeat(2, minmax(0, 1fr)); align-content: start; height: 8px; padding-top: 15px; border-left: 1px solid transparent; border-image: linear-gradient(#eee 8px, transparent 8px) 1; }
.name span { justify-self: end; white-space: nowrap; transform: rotate(-31deg); transform-origin: 100% 50%; }

.share { display: flex; align-items: flex-start; gap: 48px; padding: 21px 20px; }
.donut { width: 328px; height: 328px; }
.share-label { display: flex; align-items: center; gap: 9px; margin-top: 2px; font-size: 17px; line-height: 26px; color: #9c809f; }
.dot { width: 9px; height: 9px; border-radius: 50%; background: #ffebc0; }
```
